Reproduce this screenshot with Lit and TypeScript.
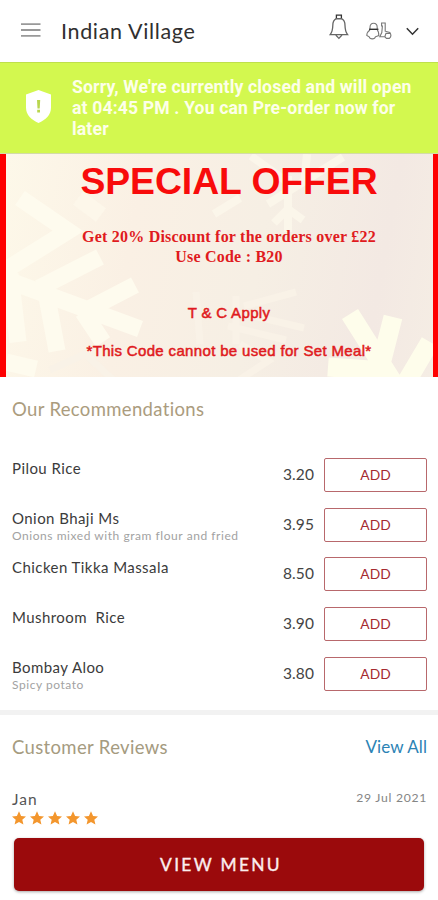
import { LitElement, html, css, svg } from "lit";
import { customElement, property } from "lit/decorators.js";

interface Dish {
  name: string;
  note?: string;
  price: string;
}

const DISHES: Dish[] = [
  { name: "Pilou Rice", price: "3.20" },
  { name: "Onion Bhaji Ms", note: "Onions mixed with gram flour and fried", price: "3.95" },
  { name: "Chicken Tikka Massala", price: "8.50" },
  { name: "Mushroom\u00a0 Rice", price: "3.90" },
  { name: "Bombay Aloo", note: "Spicy potato", price: "3.80" },
];

@customElement("top-bar")
class TopBar extends LitElement {
  static styles = css`
    :host {
      display: flex;
      align-items: center;
      height: 62px;
      box-sizing: border-box;
      padding: 0 19px 0 21px;
      background: #fff;
    }
    svg { display: block; fill: none; flex: none; }
    .menu { margin-top: -2px; }
    .title {
      margin-left: 20px;
      flex: 1;
      font-size: 21.5px;
      line-height: 26px;
      letter-spacing: 0.65px;
      color: #303030;
      white-space: nowrap;
    }
    .bell { margin: -8px 17px 0 0; }
    .people { margin: 0 14px 0 0; }
  `;
  render() {
    return html`
      <svg class="menu" width="20" height="14" viewBox="0 0 20 14" stroke="#999" stroke-width="1.8">
        <path d="M0 1.2H19.5M0 7H19.5M0 12.8H19.5" />
      </svg>
      <div class="title">Indian Village</div>
      <svg class="bell" width="20" height="26" viewBox="0 0 20 26" stroke="#666" stroke-width="1.3">
        <path d="M7.4 4.6V1.2H12.4V4.6Z" stroke="#333" />
        <path d="M7.2 4.6C4.2 6 3.8 8.4 3.8 11.5C3.7 15.8 3 18.4 1.2 20.6H18.6C16.8 18.4 16.1 15.8 16 11.5C16 8.4 15.6 6 12.6 4.6Z" />
        <path d="M6.8 21L9.9 24.4L13 21" />
      </svg>
      <svg class="people" width="26" height="18" viewBox="0 0 26 18" stroke="#777" stroke-width="1.1">
        <path d="M4 7V5.4C4 2.8 5.3 1.3 7.6 1.3S11.2 2.8 11.2 5.4V7" />
        <path d="M3 7.3H12.4" stroke="#333" stroke-width="1.4" />
        <path d="M4 8C1.8 9.3 0.8 11 0.8 13.5L3.2 14.8C3.8 17.5 8.8 17.5 9.4 14.8L12.8 13.5C12.8 11 12.8 9.3 11.2 8" />
        <path d="M15.6 1H19.2V9.2L23.8 10.5C25.2 12.5 25.2 14.8 23.4 16.4H20.5L18.8 14.8H13.8L15.8 10.5L16.4 4H15.6Z" />
        <path d="M18.8 14.8L20 11.4H24.4" />
      </svg>
      <svg width="13" height="9" viewBox="0 0 13 9" stroke="#333" stroke-width="1.5">
        <path d="M0.8 1.2L6.5 7.2L12.2 1.2" />
      </svg>
    `;
  }
}

@customElement("closed-notice")
class ClosedNotice extends LitElement {
  static styles = css`
    :host {
      display: flex;
      align-items: center;
      height: 92px;
      box-sizing: border-box;
      border-top: 1px solid #bfe04b;
      border-bottom: 1px solid #d3dba8;
      background: #d3f84f;
      padding: 0 0 0 26px;
    }
    svg { display: block; flex: none; margin-top: -3px; }
    p {
      margin: 0 0 0 21px;
      font: 700 17.6px/21px Roboto, sans-serif;
      letter-spacing: 0.15px;
      color: #fdffe9;
      white-space: nowrap;
    }
  `;
  render() {
    return html`
      <svg width="25" height="33" viewBox="0 0 25 33">
        <path d="M12.5 0L25 4.5V17.5C25 25 19.5 30 12.5 33C5.5 30 0 25 0 17.5V4.5Z" fill="#fff" />
        <path d="M11 10H14.2L13.7 18.5H11.5ZM11.2 19.8H14V22.4H11.2Z" fill="#b9d64e" />
      </svg>
      <p>Sorry, We're currently closed and will open<br />at 04:45 PM . You can Pre-order now for<br />later</p>
    `;
  }
}

@customElement("offer-banner")
class OfferBanner extends LitElement {
  static styles = css`
    :host {
      display: grid;
      height: 223px;
      box-sizing: border-box;
      border-left: 6px solid #fe0000;
      border-right: 5px solid #fe0000;
      background: linear-gradient(100deg, #fdf8e9 0%, #faf0e4 30%, #f6efe4 58%, #f3e9e3 85%, #f5ede4 100%);
      overflow: hidden;
    }
    svg, .copy { grid-area: 1 / 1; }
    svg { display: block; }
    .copy {
      display: flex;
      flex-direction: column;
      align-items: center;
      padding-left: 19px;
      color: #f80b0b;
      white-space: nowrap;
      font-family: "Liberation Sans", Arial, sans-serif;
    }
    h1 { margin: 4px 0 0; font-size: 37.3px; line-height: 46px; letter-spacing: -0.05px; font-weight: 700; }
    .deal {
      margin-top: 23px;
      text-align: center;
      font: 700 16px/20px "Liberation Serif", "Times New Roman", serif;
      letter-spacing: 0.22px;
      color: #e01a20;
    }
    .terms, .limit {
      font-size: 15px;
      line-height: 20px;
      letter-spacing: 0.34px;
      -webkit-text-stroke: 0.5px #e01a20;
      color: #e01a20;
    }
    .terms { margin-top: 36px; }
    .limit { margin-top: 18px; }
  `;
  render() {
    return html`
      <svg width="427" height="223" viewBox="6 0 427 223" fill="none">
        ${svg`
          <g stroke="#fefbee" stroke-width="17">
            <path d="M20 44L68 77L-4 122M-4 122L140 175M46 138L57 197M83 158L103 188M83 158L135 131M10 120L18 188M6 208L36 215" />
            <path d="M39 134L100 103" />
          </g>
          <path d="M78 44L101 61" stroke="#fdf7ea" stroke-width="17" />
          <g stroke="#f9f2e7" stroke-width="7">
            <path d="M196 138L200 190M236 142V190M245 160L304 174M228 172L286 186M244 152L296 138M240 190L268 207L230 232" />
            <path d="M50 216L85 200L120 232" />
          </g>
          <g stroke="#fbf6ea" stroke-width="8">
            <path d="M251 2L290 30M343 3L268 50M288 22V78M274 69L288 55L303 66" />
            <path d="M307 0L304 30M214 60L240 44" />
          </g>
          <g stroke="#fefdeb" stroke-width="19">
            <path d="M350 160L393 228M393 163L380 214M328 213L384 217M430 188L404 232" />
          </g>`}
      </svg>
      <div class="copy">
        <h1>SPECIAL OFFER</h1>
        <div class="deal">Get 20% Discount for the orders over £22<br />Use Code : B20</div>
        <div class="terms">T &amp; C Apply</div>
        <div class="limit">*This Code cannot be used for Set Meal*</div>
      </div>
    `;
  }
}

@customElement("dish-row")
class DishRow extends LitElement {
  @property({ attribute: false }) dish!: Dish;
  static styles = css`
    :host { display: flex; align-items: flex-start; height: 34px; }
    .text { flex: 1; min-width: 0; white-space: nowrap; margin-top: 1px; }
    .name { font-size: 15px; line-height: 18px; letter-spacing: 0.44px; color: #3b3b3b; }
    .note { font-size: 12px; line-height: 15px; letter-spacing: 0.55px; color: #a2a2a2; margin-top: 1px; }
    .price { font-size: 15.5px; line-height: 20px; letter-spacing: 0.1px; color: #444; margin: 6px 10px 0 0; }
    button {
      width: 103px;
      height: 34px;
      box-sizing: border-box;
      border: 1px solid #b8686c;
      border-radius: 2px;
      background: #fff;
      padding: 0;
      font: 13.8px/18px Lato, sans-serif;
      color: #a52a30;
    }
  `;
  render() {
    const { name, note, price } = this.dish;
    return html`
      <div class="text">
        <div class="name">${name}</div>
        ${note ? html`<div class="note">${note}</div>` : null}
      </div>
      <div class="price">${price}</div>
      <button>ADD</button>
    `;
  }
}

@customElement("app-root")
class AppRoot extends LitElement {
  static styles = css`
    :host {
      display: flex;
      flex-direction: column;
      height: 900px;
      overflow: hidden;
      background: #fff;
      font-family: Lato, sans-serif;
    }
    top-bar, closed-notice, offer-banner, .divider { flex: none; }
    h2 { margin: 0; font-weight: 400; font-size: 18.5px; line-height: 24px; color: #a59b80; white-space: nowrap; }
    .dishes { padding: 20px 11px 0 12px; height: 313px; flex: none; }
    .dishes h2 { letter-spacing: 0.34px; color: #ab9c7e; }
    .list { display: grid; grid-template-rows: 50px 49px 50px 50px 34px; margin-top: 37px; }
    .divider { height: 5px; background: #f2f2f2; }
    .reviews { padding: 20px 11px 0 12px; }
    .row { display: flex; justify-content: space-between; align-items: center; }
    .reviews h2 { letter-spacing: 0.35px; }
    a { font-size: 17px; line-height: 24px; letter-spacing: 0.1px; color: #2b83b5; }
    .by { margin-top: 30px; }
    .who { font-size: 15.5px; line-height: 20px; letter-spacing: 1px; color: #555; }
    .date { font-size: 12.2px; line-height: 16px; letter-spacing: 0.7px; color: #858585; margin: -3px 0 0 0; }
    .stars { display: flex; gap: 4px; margin-top: 2px; }
    .stars svg { display: block; fill: #f3962d; }
    .cta {
      margin: 13px 14px 0;
      height: 53px;
      flex: none;
      padding: 0 0 0 4px;
      border: 0;
      border-radius: 5px;
      background: #9b0a0c;
      box-shadow: 0 1px 3px rgba(0, 0, 0, 0.35);
      color: #fbeeee;
      font: 400 17.4px/24px Lato, sans-serif;
      -webkit-text-stroke: 0.35px #fbeeee;
      letter-spacing: 2.3px;
    }
  `;
  render() {
    return html`
      <top-bar></top-bar>
      <closed-notice></closed-notice>
      <offer-banner></offer-banner>
      <section class="dishes">
        <h2>Our Recommendations</h2>
        <div class="list">${DISHES.map((d) => html`<dish-row .dish=${d}></dish-row>`)}</div>
      </section>
      <div class="divider"></div>
      <section class="reviews">
        <div class="row"><h2>Customer Reviews</h2><a>View All</a></div>
        <div class="row by"><div class="who">Jan</div><div class="date">29 Jul 2021</div></div>
        <div class="stars">
          ${[0, 1, 2, 3, 4].map(
            () => html`<svg width="14" height="14" viewBox="0 0 14 14">
              <path d="M7 0.3L9.1 4.9L14 5.4L10.3 8.7L11.4 13.6L7 11L2.6 13.6L3.7 8.7L0 5.4L4.9 4.9Z" />
            </svg>`
          )}
        </div>
      </section>
      <button class="cta">VIEW MENU</button>
    `;
  }
}
